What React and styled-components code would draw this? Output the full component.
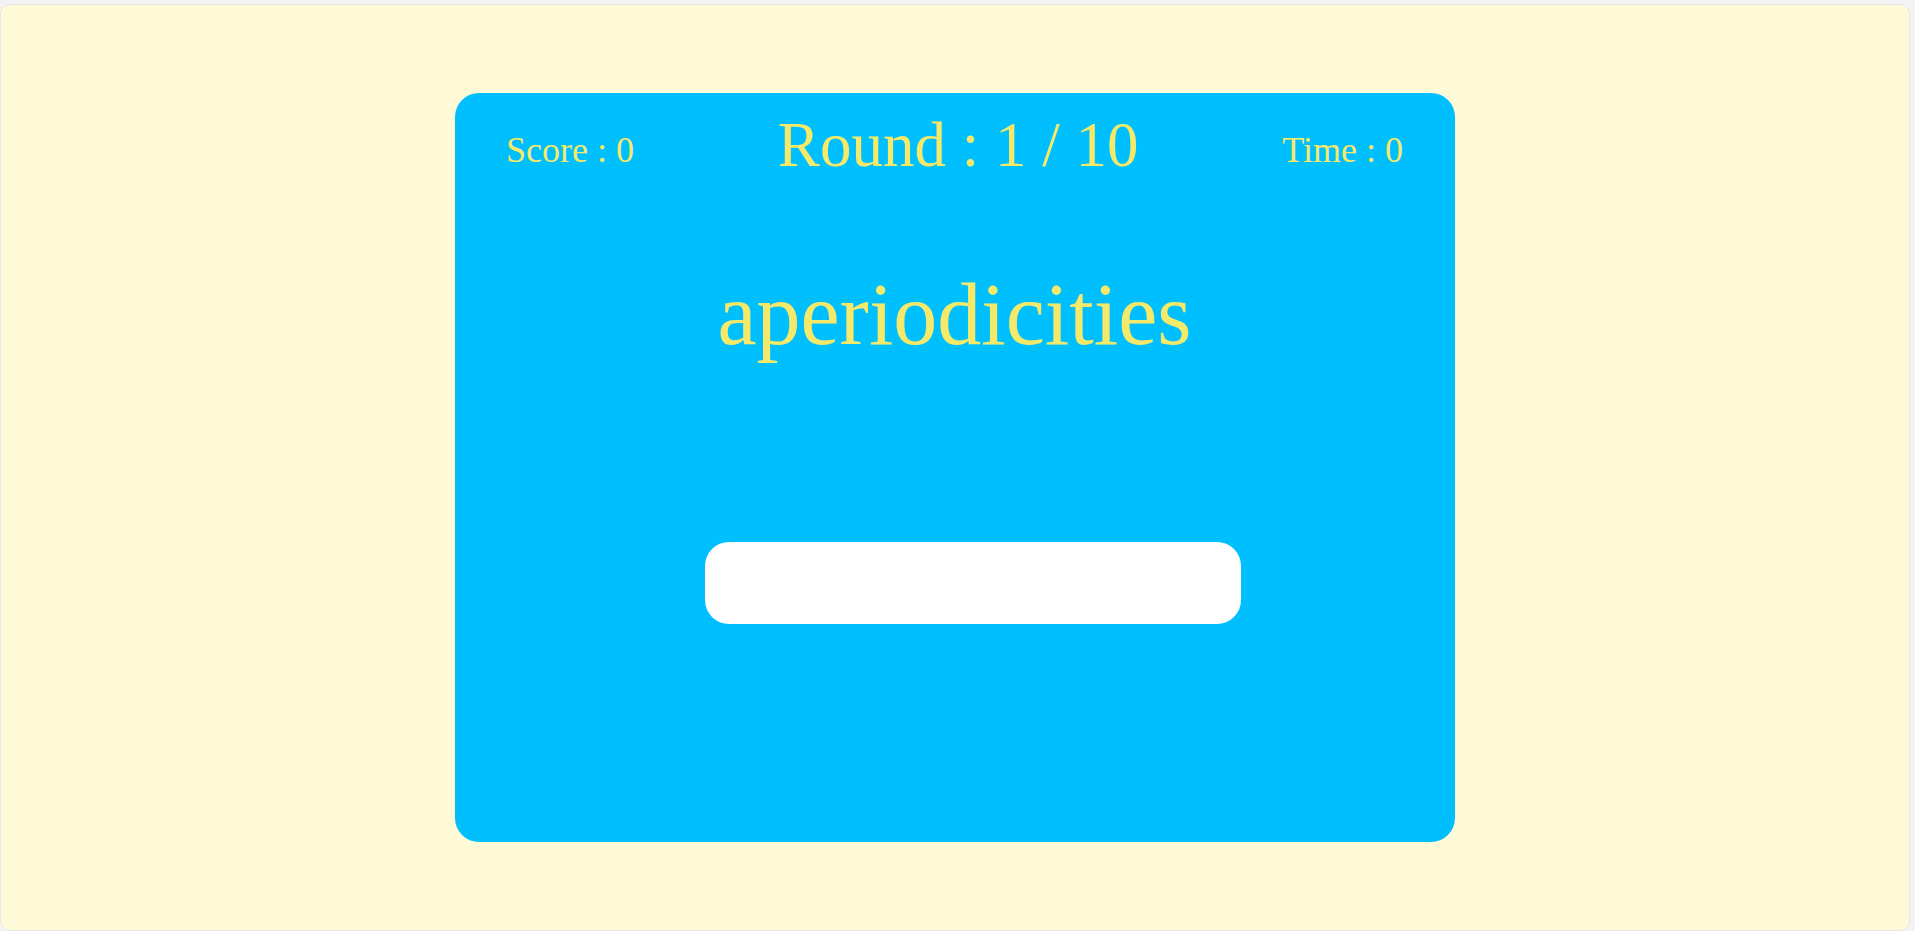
import React from "react";
import styled, { createGlobalStyle } from "styled-components";

const GlobalStyle = createGlobalStyle`
  * {
    box-sizing: border-box;
  }
  html, body {
    margin: 0;
    padding: 0;
    background: #f3f3f3;
    font-family: "Liberation Serif", "Times New Roman", serif;
  }
  #root {
    padding: 4px 5px 0 0;
  }
`;

const Page = styled.div`
  height: 927px;
  background: #fefad8;
  border: 1px solid #e6e6e6;
  border-radius: 10px;
  padding-top: 88px;
`;

const Card = styled.main`
  width: 1000px;
  height: 749px;
  margin: 0 auto;
  background: #00bfff;
  border-radius: 24px;
  padding: 21px 52px 0 51px;
  color: #f5e96a;
`;

const Header = styled.header`
  display: flex;
  align-items: center;
  justify-content: space-between;
`;

const Stat = styled.div`
  font-size: ${(p) => (p.$big ? "63px" : "36px")};
  line-height: 1;
  margin-top: ${(p) => (p.$big ? "0" : "8px")};
  white-space: nowrap;
`;

const Word = styled.h1`
  margin: 94px 0 0;
  font-size: 88px;
  font-weight: normal;
  line-height: 1;
  text-align: center;
`;

const Form = styled.form`
  width: 500px;
  margin: 183px auto 0;
`;

const Input = styled.input`
  display: block;
  box-sizing: content-box;
  width: 100%;
  height: 82px;
  padding: 0 18px;
  border: none;
  border-radius: 24px;
  background: #fff;
  outline: none;
  font-family: inherit;
  font-size: 40px;
  color: #333;
`;

const App = () => (
  <>
    <GlobalStyle />
    <Page>
      <Card>
        <Header>
          <Stat>Score : 0</Stat>
          <Stat $big>Round : 1 / 10</Stat>
          <Stat>Time : 0</Stat>
        </Header>
        <Word>aperiodicities</Word>
        <Form onSubmit={(e) => e.preventDefault()}>
          <Input type="text" aria-label="answer" />
        </Form>
      </Card>
    </Page>
  </>
);

export default App;
